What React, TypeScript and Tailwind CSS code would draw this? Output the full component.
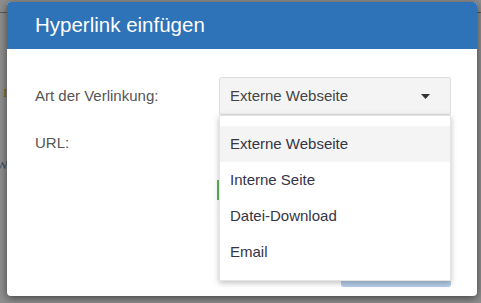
import React from "react";

export default function App() {
  const items = ["Externe Webseite", "Interne Seite", "Datei-Download", "Email"];
  return (
    <div
      className="relative w-[481px] h-[303px] overflow-hidden bg-[#8e8e8e]"
      style={{ fontFamily: '"Liberation Sans", Arial, sans-serif' }}
    >
      {/* dimmed page behind the dialog */}
      <div className="pt-[12px]">
        <div className="h-px bg-[#5a5a5a]" />
        <div
          className="pt-[36px] flex flex-col gap-[14px] text-[13px] leading-[20px] -ml-[4px]"
          style={{ fontFamily: '"Liberation Serif", serif' }}
        >
          <span className="text-[#3d4e6a]">ı</span>
          <span className="text-[#8a5a20] ml-[7px]">I</span>
          <span className="text-[#3d4e6a]">ı</span>
          <span className="text-[#3d4e6a] mt-[4px]">W</span>
        </div>
      </div>

      {/* dialog */}
      <div className="absolute left-[7px] top-[2px] w-[470px] h-[294px] bg-white rounded-[4px] overflow-hidden shadow-[0_2px_8px_rgba(0,0,0,0.55)] flex flex-col">
        <div className="h-[47px] bg-[#2e73b8] flex items-center pl-[28px]">
          <span className="text-white text-[20.5px] leading-none">Hyperlink einfügen</span>
        </div>

        <div className="pt-[28px] pl-[28px] pr-[26px] flex flex-col">
          {/* row 1 */}
          <div className="flex items-center h-[38px]">
            <div className="w-[184px] text-[15px] text-[#555]">Art der Verlinkung:</div>
            <div className="relative w-[232px] h-[38px]">
              <div className="h-full bg-[#f4f4f4] border border-[#dedede] rounded-[2px] flex items-center justify-between pl-[10px] pr-[20px] text-[15px] text-[#444]">
                <span>Externe Webseite</span>
                <svg width="9" height="5" viewBox="0 0 9 5">
                  <polygon points="0,0 9,0 4.5,5" fill="#333" />
                </svg>
              </div>
              <div className="absolute top-full left-0 w-full z-20 bg-white border border-[#e4e4e4] shadow-[0_2px_6px_rgba(0,0,0,0.25)] pt-[10px] pb-[10px]">
                {items.map((t, i) => (
                  <div
                    key={t}
                    className={
                      "h-[36px] flex items-center pl-[10px] text-[15px] text-[#353545] " +
                      (i === 0 ? "bg-[#f4f4f4]" : "")
                    }
                  >
                    {t}
                  </div>
                ))}
              </div>
            </div>
          </div>

          {/* row 2 */}
          <div className="flex items-center h-[36px] mt-[10px]">
            <div className="w-[184px] text-[15px] text-[#555]">URL:</div>
            <div className="w-[232px] h-[36px] border border-[#ccc] rounded-[2px]" />
          </div>

          {/* row 3 */}
          <div className="flex h-[20px] mt-[19px]">
            <div className="w-[182px]" />
            <div className="w-[2px] h-full bg-[#5cb85c]" />
          </div>

          {/* footer */}
          <div className="flex justify-end mt-[53px]">
            <div className="w-[110px] h-[34px] bg-[#b3cce8] rounded-[3px]" />
          </div>
        </div>
      </div>
    </div>
  );
}
